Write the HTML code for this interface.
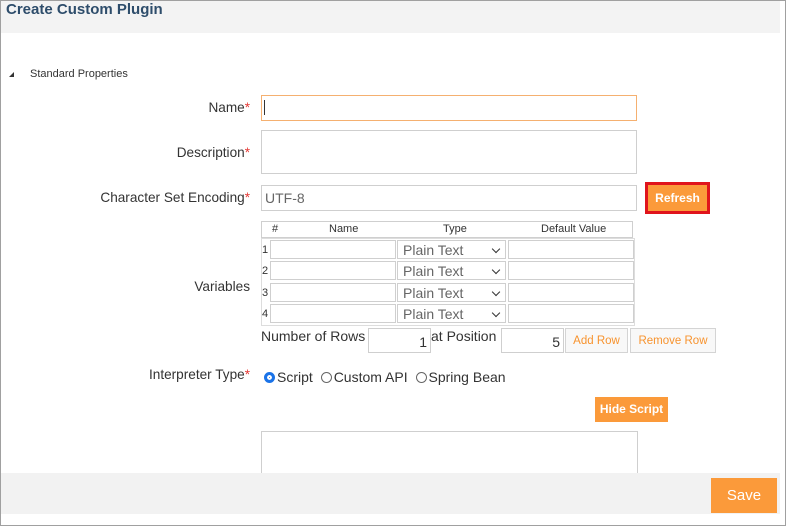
<!DOCTYPE html><html><head><style>
*{box-sizing:border-box}
body{margin:0;width:786px;height:526px;background:#fff;font-family:"Liberation Sans",Arial,sans-serif;position:relative;overflow:hidden}
.a{position:absolute}
.frame{left:0;top:0;width:786px;height:526px;border:1px solid #a0a0a0}
.inp{position:absolute;border:1px solid #cfcfcf;background:#fff}
.lbl{position:absolute;font-size:13.6px;color:#333;text-align:right}
.st{color:#e53935}
.btn{position:absolute;background:#fb9a3a;color:#fff;font-weight:bold;font-size:12px;text-align:center}
.wb{position:absolute;border:1px solid #d4d4d4;background:#f8f8f8;color:#f7932e;font-size:11.5px;text-align:center}
.sel{position:absolute;border:1px solid #cfcfcf;background:#fff;font-size:14px;color:#666;padding-left:5px;line-height:18px}
.sel:after{content:"";position:absolute;right:6px;top:5px;width:5px;height:5px;border-right:1.5px solid #333;border-bottom:1.5px solid #333;transform:rotate(45deg)}
.num{position:absolute;font-size:11px;color:#333}
.rad{display:inline-block;width:11px;height:11px;border:1px solid #666;border-radius:50%;vertical-align:-1px;margin-right:2px}
</style></head><body>
<div class="a" style="left:0;top:0;width:780px;height:33px;background:#f3f3f3"></div>
<div class="a" style="left:6px;top:1px;font-size:15px;font-weight:bold;color:#2e4d6b">Create Custom Plugin</div>
<div class="a" style="left:9px;top:72px;width:0;height:0;border-left:5px solid transparent;border-bottom:5px solid #333"></div>
<div class="a" style="left:30px;top:68px;font-size:11px;color:#333">Standard Properties</div>

<div class="lbl" style="right:536px;top:100px">Name<span class="st">*</span></div>
<div class="inp" style="left:261px;top:95px;width:376px;height:26px;border-color:#f5b070"></div>
<div class="a" style="left:264px;top:100px;width:1px;height:15px;background:#333"></div>

<div class="lbl" style="right:536px;top:145px">Description<span class="st">*</span></div>
<div class="inp" style="left:261px;top:130px;width:376px;height:44px"></div>

<div class="lbl" style="right:536px;top:190px">Character Set Encoding<span class="st">*</span></div>
<div class="inp" style="left:261px;top:185px;width:376px;height:26px;font-size:14px;color:#666;padding:4px 0 0 3px">UTF-8</div>
<div class="a" style="left:645px;top:182px;width:65px;height:32px;border:3px solid #e0141c"></div>
<div class="btn" style="left:648px;top:185px;width:59px;height:26px;line-height:26px">Refresh</div>

<div class="inp" style="left:261px;top:221px;width:372px;height:17px"></div>
<div class="num" style="left:272px;top:223px">#</div>
<div class="num" style="left:329px;top:223px">Name</div>
<div class="num" style="left:443px;top:223px">Type</div>
<div class="num" style="left:541px;top:223px">Default Value</div>

<div class="inp" style="left:261px;top:238px;width:374px;height:88px;border-color:#ddd"></div>
<div class="lbl" style="right:536px;top:279px">Variables</div>

<div class="num" style="left:262px;top:244px">1</div>
<div class="inp" style="left:270px;top:240px;width:126px;height:19px"></div>
<div class="sel" style="left:397px;top:240px;width:109px;height:19px">Plain Text</div>
<div class="inp" style="left:508px;top:240px;width:126px;height:19px"></div>
<div class="num" style="left:262px;top:265px">2</div>
<div class="inp" style="left:270px;top:261px;width:126px;height:19px"></div>
<div class="sel" style="left:397px;top:261px;width:109px;height:19px">Plain Text</div>
<div class="inp" style="left:508px;top:261px;width:126px;height:19px"></div>
<div class="num" style="left:262px;top:287px">3</div>
<div class="inp" style="left:270px;top:283px;width:126px;height:19px"></div>
<div class="sel" style="left:397px;top:283px;width:109px;height:19px">Plain Text</div>
<div class="inp" style="left:508px;top:283px;width:126px;height:19px"></div>
<div class="num" style="left:262px;top:308px">4</div>
<div class="inp" style="left:270px;top:304px;width:126px;height:19px"></div>
<div class="sel" style="left:397px;top:304px;width:109px;height:19px">Plain Text</div>
<div class="inp" style="left:508px;top:304px;width:126px;height:19px"></div>

<div class="a" style="left:261px;top:328px;font-size:14px;color:#333">Number of Rows</div>
<div class="inp" style="left:368px;top:328px;width:63px;height:25px;font-size:14px;color:#333;text-align:right;padding:5px 3px 0 0">1</div>
<div class="a" style="left:431px;top:328px;font-size:14px;color:#333">at Position</div>
<div class="inp" style="left:501px;top:328px;width:63px;height:25px;font-size:14px;color:#333;text-align:right;padding:5px 3px 0 0">5</div>
<div class="wb" style="left:565px;top:328px;width:63px;height:25px;line-height:24px">Add Row</div>
<div class="wb" style="left:630px;top:328px;width:86px;height:25px;line-height:24px">Remove Row</div>

<div class="lbl" style="right:536px;top:367px">Interpreter Type<span class="st">*</span></div>
<div class="a" style="left:264px;top:369px;font-size:14px;color:#333"><span class="rad" style="border:3px solid #1a73e8;box-shadow:inset 0 0 0 2px #fff;background:#1a73e8"></span>Script <span class="rad" style="margin-left:4px"></span>Custom API <span class="rad" style="margin-left:4px"></span>Spring Bean</div>

<div class="btn" style="left:595px;top:397px;width:73px;height:25px;line-height:25px">Hide Script</div>
<div class="inp" style="left:261px;top:431px;width:377px;height:60px"></div>

<div class="a" style="left:1px;top:473px;width:779px;height:41px;background:#f2f2f2"></div>
<div class="btn" style="left:711px;top:478px;width:66px;height:35px;line-height:35px;font-weight:normal;font-size:15px">Save</div>
<div class="a frame"></div>
</body></html>
